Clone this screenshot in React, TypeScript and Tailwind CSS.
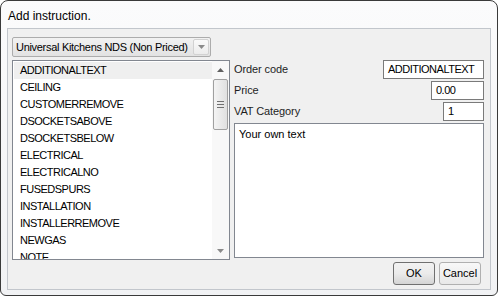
import React from "react";

const items = [
  "ADDITIONALTEXT",
  "CEILING",
  "CUSTOMERREMOVE",
  "DSOCKETSABOVE",
  "DSOCKETSBELOW",
  "ELECTRICAL",
  "ELECTRICALNO",
  "FUSEDSPURS",
  "INSTALLATION",
  "INSTALLERREMOVE",
  "NEWGAS",
  "NOTE",
];

const Arrow = ({ down, color = "#5a5a5a" }: { down?: boolean; color?: string }) => (
  <svg width="7" height="4" viewBox="0 0 7 4" className={down ? "rotate-180" : ""}>
    <path d="M0 4 L3.5 0 L7 4 Z" fill={color} />
  </svg>
);

const Field = ({ label, value, width }: { label: string; value: string; width: string }) => (
  <div className="flex h-[19px] items-center justify-between">
    <span className="text-[11px] tracking-[-0.1px] text-[#1e1e1e]">{label}</span>
    <div className={`${width} flex h-full items-center whitespace-nowrap border border-[#7a7a7a] bg-white pl-[4px] text-[11px] tracking-[-0.5px] text-black`}>
      {value}
    </div>
  </div>
);

export default function App() {
  const [selected, setSelected] = React.useState(0);

  return (
    <div className="h-[296px] w-[498px] bg-white font-['Liberation_Sans',Arial,sans-serif] leading-none">
      <div className="flex h-full flex-col rounded-t-[8px] rounded-b-[6px] border border-[#3a3a3a] bg-gradient-to-b from-[#fbfbfc] to-[#f1f2f4] px-[6px] pb-[5px]">
        <div className="h-[27px] pl-[1px] pt-[9px] text-[12px] text-black">Add instruction.</div>

        <div className="flex-1 border border-[#c2c6cc] bg-[#f0f0f0] px-[4px] pt-[8px]">
          {/* combo */}
          <div className="flex h-[20px] w-[199px] items-center justify-between rounded-[2px] border border-[#acacac] bg-gradient-to-b from-[#f2f2f2] to-[#e2e2e2] pl-[3px] pr-[1px] text-[11px] text-black">
            <span className="whitespace-nowrap tracking-[-0.3px]">Universal Kitchens NDS (Non Priced)</span>
            <div className="flex h-[16px] w-[16px] items-center justify-center rounded-[2px] border border-[#d2d2d2] bg-gradient-to-b from-[#fafafa] to-[#ececec]">
              <Arrow down color="#8a8a8a" />
            </div>
          </div>

          <div className="mt-[3px] flex items-start gap-[4px]">
            {/* list */}
            <div className="flex h-[200px] w-[218px] border border-[#828790] bg-white">
              <div className="flex-1 overflow-hidden pt-[1px]">
                {items.map((it, i) => (
                  <div
                    key={it}
                    onClick={() => setSelected(i)}
                    className={`ml-[1px] flex h-[17px] items-center whitespace-nowrap pl-[6px] text-[11px] tracking-[-0.5px] text-black ${
                      i === selected ? "bg-[#efefef]" : ""
                    }`}
                  >
                    {it}
                  </div>
                ))}
              </div>
              <div className="flex w-[17px] flex-col items-center bg-[#f8f8f8]">
                <div className="flex h-[17px] w-full items-center justify-center">
                  <Arrow color="#606060" />
                </div>
                <div className="mt-[1px] flex h-[51px] w-[15px] flex-col items-center justify-center gap-[2px] rounded-[2px] border border-[#a0a0a0] bg-gradient-to-r from-[#f4f4f4] to-[#e0e0e0]">
                  <div className="h-[1px] w-[7px] bg-[#707070]" />
                  <div className="h-[1px] w-[7px] bg-[#707070]" />
                  <div className="h-[1px] w-[7px] bg-[#707070]" />
                </div>
                <div className="flex-1" />
                <div className="flex h-[17px] w-full items-center justify-center">
                  <Arrow down color="#8a8a8a" />
                </div>
              </div>
            </div>

            {/* details */}
            <div className="flex w-[250px] flex-col gap-[2px]">
              <Field label="Order code" value="ADDITIONALTEXT" width="w-[101px]" />
              <Field label="Price" value="0.00" width="w-[53px]" />
              <Field label="VAT Category" value="1" width="w-[41px]" />
              <div className="h-[135px] border border-[#828790] bg-white px-[4px] pt-[5px] text-[11px] text-black">
                Your own text
              </div>
              <div className="mt-[2px] flex justify-end gap-[4px] pr-[3px]">
                <button className="h-[23px] w-[42px] rounded-[3px] border border-[#707070] bg-gradient-to-b from-[#f2f2f2] via-[#ebebeb] to-[#d4d4d4] text-[11px] text-black">
                  OK
                </button>
                <button className="h-[23px] w-[42px] rounded-[3px] border border-[#b0b0b0] bg-gradient-to-b from-[#f8f8f8] to-[#e8e8e8] text-[11px] text-black">
                  Cancel
                </button>
              </div>
            </div>
          </div>
        </div>
      </div>
    </div>
  );
}
